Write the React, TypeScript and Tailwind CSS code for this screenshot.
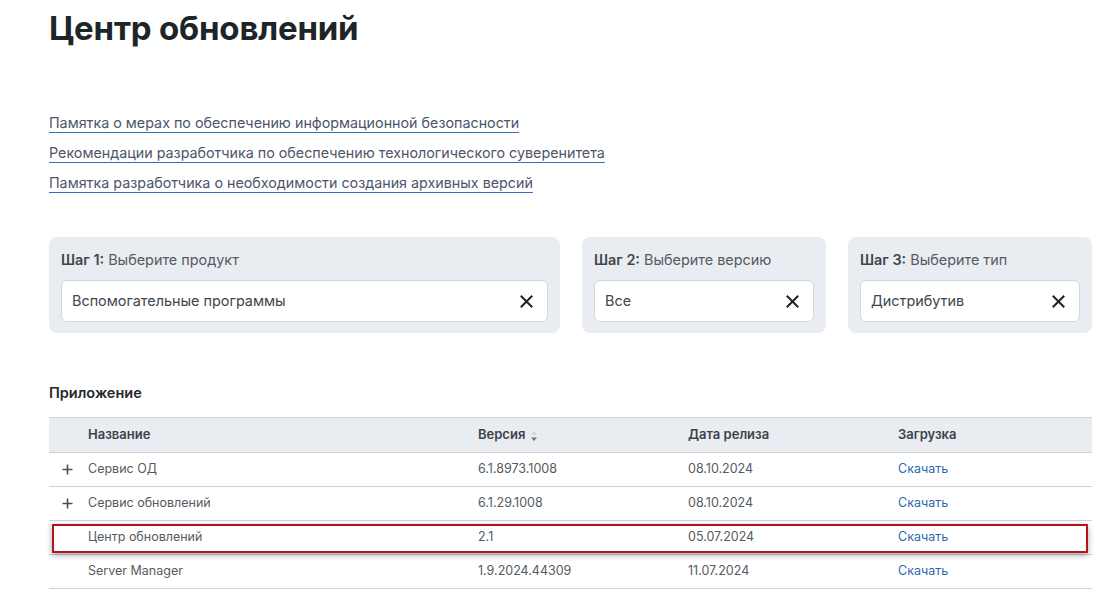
import React from "react";

const font = { fontFamily: "Inter, 'Noto Sans', sans-serif" };

function XIcon() {
  return (
    <svg width="13" height="13" viewBox="0 0 13 13" fill="none">
      <path d="M1.5 1.5L11.5 11.5M11.5 1.5L1.5 11.5" stroke="#1e2326" strokeWidth="2" strokeLinecap="square" />
    </svg>
  );
}

function PlusIcon() {
  return (
    <svg width="11" height="11" viewBox="0 0 11 11" fill="none">
      <path d="M5.5 0.5V10.5M0.5 5.5H10.5" stroke="#4a4f55" strokeWidth="1.6" />
    </svg>
  );
}

function SortIcon() {
  return (
    <svg width="8" height="12" viewBox="0 0 8 12" className="ml-[5px] mt-[2px]">
      <path d="M4 1L7 4.5H1Z" fill="#cfd3d8" />
      <path d="M4 11L7 7.5H1Z" fill="#6b7178" />
    </svg>
  );
}

function StepCard({ step, label, value, width }: { step: string; label: string; value: string; width: string }) {
  return (
    <div className={`${width} rounded-[8px] bg-[#e9ecf1] px-[12px] pt-[13px] pb-[11px]`}>
      <div className="text-[14.4px] leading-[20px] text-[#545b62]">
        <span className="font-semibold text-[#40464c]">{step}</span> {label}
      </div>
      <div className="mt-[10px] flex h-[42px] items-center justify-between rounded-[6px] border border-[#d3d7dd] bg-white pl-[10px] pr-[14px]">
        <span className="text-[14.4px] text-[#40464c]">{value}</span>
        <XIcon />
      </div>
    </div>
  );
}

const rows = [
  { plus: true, name: "Сервис ОД", ver: "6.1.8973.1008", date: "08.10.2024" },
  { plus: true, name: "Сервис обновлений", ver: "6.1.29.1008", date: "08.10.2024" },
  { plus: false, name: "Центр обновлений", ver: "2.1", date: "05.07.2024", highlight: true },
  { plus: false, name: "Server Manager", ver: "1.9.2024.44309", date: "11.07.2024" },
];

export default function App() {
  return (
    <div style={font} className="min-h-[609px] w-[1116px] bg-white pl-[49px] pr-[24px] pt-[8px]">
      <h1 className="text-[33px] font-bold leading-[40px] tracking-[-0.2px] text-[#1d2528]">Центр обновлений</h1>

      <div className="mt-[60px] flex flex-col items-start">
        {[
          "Памятка о мерах по обеспечению информационной безопасности",
          "Рекомендации разработчика по обеспечению технологического суверенитета",
          "Памятка разработчика о необходимости создания архивных версий",
        ].map((t) => (
          <a
            key={t}
            href="#"
            className="text-[14.3px] leading-[30px] text-[#4d5569] underline decoration-[#2f6fbf] decoration-1 underline-offset-[4px]"
          >
            {t}
          </a>
        ))}
      </div>

      <div className="mt-[39px] flex gap-[22px]">
        <StepCard step="Шаг 1:" label="Выберите продукт" value="Вспомогательные программы" width="w-[511px]" />
        <StepCard step="Шаг 2:" label="Выберите версию" value="Все" width="w-[244px]" />
        <StepCard step="Шаг 3:" label="Выберите тип" value="Дистрибутив" width="w-[244px]" />
      </div>

      <div className="mt-[50px] text-[14.5px] font-semibold leading-[20px] text-[#23292d]">Приложение</div>

      <div className="mt-[14px] w-[1043px] text-[12.5px] text-[#555b61]">
        <div className="grid h-[36px] grid-cols-[39px_390px_210px_210px_1fr] items-center border-y border-[#cdd2d9] bg-[#e9ecf1] text-[13px] font-semibold text-[#3d4349]">
          <div />
          <div>Название</div>
          <div className="flex items-center">
            Версия
            <SortIcon />
          </div>
          <div>Дата релиза</div>
          <div>Загрузка</div>
        </div>
        {rows.map((r) => (
          <div
            key={r.name}
            className="relative grid h-[34px] grid-cols-[39px_390px_210px_210px_1fr] items-center border-b border-[#cdd2d9]"
          >
            <div className="flex items-center pl-[13px]">{r.plus ? <PlusIcon /> : null}</div>
            <div>{r.name}</div>
            <div>{r.ver}</div>
            <div>{r.date}</div>
            <div>
              <a href="#" className="text-[#2c68b0]">
                Скачать
              </a>
            </div>
            {r.highlight ? (
              <span className="pointer-events-none absolute left-[3px] right-[4px] top-[3px] h-[29px] border-2 border-[#b5121b] shadow-[0_2px_6px_rgba(0,0,0,0.35)]" />
            ) : null}
          </div>
        ))}
      </div>
    </div>
  );
}
